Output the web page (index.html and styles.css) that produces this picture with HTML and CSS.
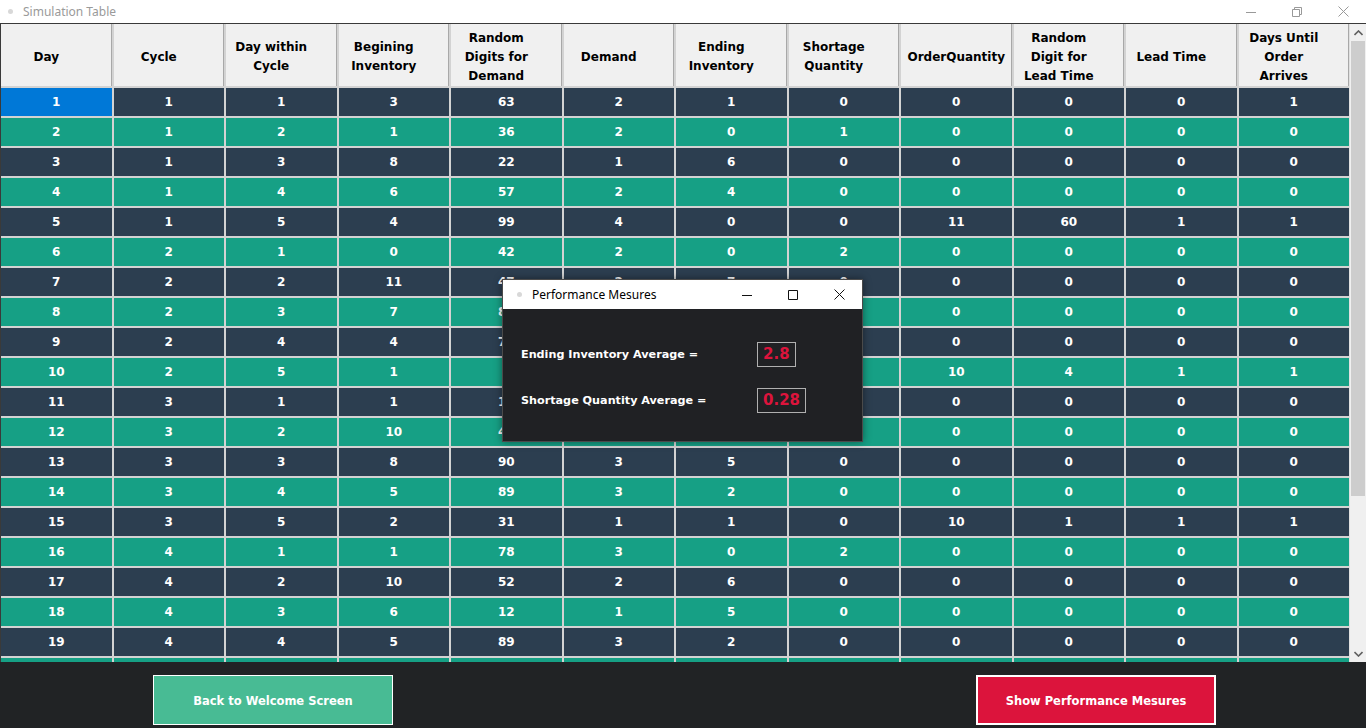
FILE: index.html
```html
<!DOCTYPE html>
<html>
<head>
<meta charset="utf-8">
<title>Simulation Table</title>
<link rel="stylesheet" href="styles.css">
</head>
<body>
<div class="app">
  <div class="titlebar">
    <div class="tb-left">
      <span class="app-icon"></span>
      <span class="tb-title">Simulation Table</span>
    </div>
    <div class="tb-controls">
      <span class="tb-btn"><svg width="10" height="10" viewBox="0 0 10 10"><path d="M0 5.5h10" stroke="#999" stroke-width="1"/></svg></span>
      <span class="tb-btn"><svg width="10" height="10" viewBox="0 0 10 10"><path d="M0.5 2.5h7v7h-7z M2.5 2.5v-2h7v7h-2" fill="none" stroke="#999" stroke-width="1"/></svg></span>
      <span class="tb-btn"><svg width="11" height="11" viewBox="0 0 11 11"><path d="M0.5 0.5l10 10M10.5 0.5l-10 10" stroke="#999" stroke-width="1"/></svg></span>
    </div>
  </div>

  <div class="table-wrap">
    <div class="grid" id="grid">
      <div class="th">Day</div>
      <div class="th">Cycle</div>
      <div class="th">Day within<br>Cycle</div>
      <div class="th">Begining<br>Inventory</div>
      <div class="th">Random<br>Digits for<br>Demand</div>
      <div class="th">Demand</div>
      <div class="th">Ending<br>Inventory</div>
      <div class="th">Shortage<br>Quantity</div>
      <div class="th wide">OrderQuantity</div>
      <div class="th">Random<br>Digit for<br>Lead Time</div>
      <div class="th">Lead Time</div>
      <div class="th">Days Until<br>Order<br>Arrives</div>

      <div class="td sel">1</div><div class="td d">1</div><div class="td d">1</div><div class="td d">3</div><div class="td d">63</div><div class="td d">2</div><div class="td d">1</div><div class="td d">0</div><div class="td d">0</div><div class="td d">0</div><div class="td d">0</div><div class="td d">1</div>
      <div class="td g">2</div><div class="td g">1</div><div class="td g">2</div><div class="td g">1</div><div class="td g">36</div><div class="td g">2</div><div class="td g">0</div><div class="td g">1</div><div class="td g">0</div><div class="td g">0</div><div class="td g">0</div><div class="td g">0</div>
      <div class="td d">3</div><div class="td d">1</div><div class="td d">3</div><div class="td d">8</div><div class="td d">22</div><div class="td d">1</div><div class="td d">6</div><div class="td d">0</div><div class="td d">0</div><div class="td d">0</div><div class="td d">0</div><div class="td d">0</div>
      <div class="td g">4</div><div class="td g">1</div><div class="td g">4</div><div class="td g">6</div><div class="td g">57</div><div class="td g">2</div><div class="td g">4</div><div class="td g">0</div><div class="td g">0</div><div class="td g">0</div><div class="td g">0</div><div class="td g">0</div>
      <div class="td d">5</div><div class="td d">1</div><div class="td d">5</div><div class="td d">4</div><div class="td d">99</div><div class="td d">4</div><div class="td d">0</div><div class="td d">0</div><div class="td d">11</div><div class="td d">60</div><div class="td d">1</div><div class="td d">1</div>
      <div class="td g">6</div><div class="td g">2</div><div class="td g">1</div><div class="td g">0</div><div class="td g">42</div><div class="td g">2</div><div class="td g">0</div><div class="td g">2</div><div class="td g">0</div><div class="td g">0</div><div class="td g">0</div><div class="td g">0</div>
      <div class="td d">7</div><div class="td d">2</div><div class="td d">2</div><div class="td d">11</div><div class="td d">47</div><div class="td d">2</div><div class="td d">7</div><div class="td d">0</div><div class="td d">0</div><div class="td d">0</div><div class="td d">0</div><div class="td d">0</div>
      <div class="td g">8</div><div class="td g">2</div><div class="td g">3</div><div class="td g">7</div><div class="td g">86</div><div class="td g">3</div><div class="td g">4</div><div class="td g">0</div><div class="td g">0</div><div class="td g">0</div><div class="td g">0</div><div class="td g">0</div>
      <div class="td d">9</div><div class="td d">2</div><div class="td d">4</div><div class="td d">4</div><div class="td d">74</div><div class="td d">3</div><div class="td d">1</div><div class="td d">0</div><div class="td d">0</div><div class="td d">0</div><div class="td d">0</div><div class="td d">0</div>
      <div class="td g">10</div><div class="td g">2</div><div class="td g">5</div><div class="td g">1</div><div class="td g">5</div><div class="td g">0</div><div class="td g">1</div><div class="td g">0</div><div class="td g">10</div><div class="td g">4</div><div class="td g">1</div><div class="td g">1</div>
      <div class="td d">11</div><div class="td d">3</div><div class="td d">1</div><div class="td d">1</div><div class="td d">18</div><div class="td d">1</div><div class="td d">0</div><div class="td d">0</div><div class="td d">0</div><div class="td d">0</div><div class="td d">0</div><div class="td d">0</div>
      <div class="td g">12</div><div class="td g">3</div><div class="td g">2</div><div class="td g">10</div><div class="td g">45</div><div class="td g">2</div><div class="td g">8</div><div class="td g">0</div><div class="td g">0</div><div class="td g">0</div><div class="td g">0</div><div class="td g">0</div>
      <div class="td d">13</div><div class="td d">3</div><div class="td d">3</div><div class="td d">8</div><div class="td d">90</div><div class="td d">3</div><div class="td d">5</div><div class="td d">0</div><div class="td d">0</div><div class="td d">0</div><div class="td d">0</div><div class="td d">0</div>
      <div class="td g">14</div><div class="td g">3</div><div class="td g">4</div><div class="td g">5</div><div class="td g">89</div><div class="td g">3</div><div class="td g">2</div><div class="td g">0</div><div class="td g">0</div><div class="td g">0</div><div class="td g">0</div><div class="td g">0</div>
      <div class="td d">15</div><div class="td d">3</div><div class="td d">5</div><div class="td d">2</div><div class="td d">31</div><div class="td d">1</div><div class="td d">1</div><div class="td d">0</div><div class="td d">10</div><div class="td d">1</div><div class="td d">1</div><div class="td d">1</div>
      <div class="td g">16</div><div class="td g">4</div><div class="td g">1</div><div class="td g">1</div><div class="td g">78</div><div class="td g">3</div><div class="td g">0</div><div class="td g">2</div><div class="td g">0</div><div class="td g">0</div><div class="td g">0</div><div class="td g">0</div>
      <div class="td d">17</div><div class="td d">4</div><div class="td d">2</div><div class="td d">10</div><div class="td d">52</div><div class="td d">2</div><div class="td d">6</div><div class="td d">0</div><div class="td d">0</div><div class="td d">0</div><div class="td d">0</div><div class="td d">0</div>
      <div class="td g">18</div><div class="td g">4</div><div class="td g">3</div><div class="td g">6</div><div class="td g">12</div><div class="td g">1</div><div class="td g">5</div><div class="td g">0</div><div class="td g">0</div><div class="td g">0</div><div class="td g">0</div><div class="td g">0</div>
      <div class="td d">19</div><div class="td d">4</div><div class="td d">4</div><div class="td d">5</div><div class="td d">89</div><div class="td d">3</div><div class="td d">2</div><div class="td d">0</div><div class="td d">0</div><div class="td d">0</div><div class="td d">0</div><div class="td d">0</div>
      <div class="td g"></div><div class="td g"></div><div class="td g"></div><div class="td g"></div><div class="td g"></div><div class="td g"></div><div class="td g"></div><div class="td g"></div><div class="td g"></div><div class="td g"></div><div class="td g"></div><div class="td g"></div>
    </div>
    <div class="scrollbar">
      <div class="sb-arrow"><svg width="9" height="6" viewBox="0 0 9 6"><path d="M0.5 5L4.5 1L8.5 5" fill="none" stroke="#606060" stroke-width="1.6"/></svg></div>
      <div class="sb-track"><div class="sb-thumb"></div></div>
      <div class="sb-arrow"><svg width="9" height="6" viewBox="0 0 9 6"><path d="M0.5 1L4.5 5L8.5 1" fill="none" stroke="#606060" stroke-width="1.6"/></svg></div>
    </div>
  </div>

  <div class="footer">
    <button class="btn btn-green">Back to Welcome Screen</button>
    <button class="btn btn-red">Show Performance Mesures</button>
  </div>

  <div class="dialog">
    <div class="dlg-title">
      <div class="tb-left">
        <span class="app-icon"></span>
        <span class="dlg-text">Performance Mesures</span>
      </div>
      <div class="dlg-controls">
        <span class="dlg-btn"><svg width="10" height="10" viewBox="0 0 10 10"><path d="M0 5.5h10" stroke="#111" stroke-width="1"/></svg></span>
        <span class="dlg-btn"><svg width="10" height="10" viewBox="0 0 10 10"><path d="M0.5 0.5h9v9h-9z" fill="none" stroke="#111" stroke-width="1"/></svg></span>
        <span class="dlg-btn"><svg width="11" height="11" viewBox="0 0 11 11"><path d="M0.5 0.5l10 10M10.5 0.5l-10 10" stroke="#111" stroke-width="1"/></svg></span>
      </div>
    </div>
    <div class="dlg-body">
      <div class="dlg-row">
        <span class="dlg-label">Ending Inventory Average =</span>
        <span class="dlg-value">2.8</span>
      </div>
      <div class="dlg-row">
        <span class="dlg-label">Shortage Quantity Average =</span>
        <span class="dlg-value">0.28</span>
      </div>
    </div>
  </div>
</div>
</body>
</html>
```

FILE: styles.css
```css
* { box-sizing: border-box; }
html, body { margin: 0; padding: 0; }
body {
  width: 1366px;
  height: 728px;
  overflow: hidden;
  background: #ffffff;
  font-family: "DejaVu Sans", "Liberation Sans", sans-serif;
}
.app {
  position: relative;
  width: 1366px;
  height: 728px;
  display: flex;
  flex-direction: column;
}
.titlebar {
  height: 23px;
  display: flex;
  justify-content: space-between;
  align-items: center;
  background: #ffffff;
}
.tb-left {
  display: flex;
  align-items: center;
}
.app-icon {
  width: 5px;
  height: 5px;
  border-radius: 50%;
  background: #d8d8d8;
  margin-left: 8px;
  margin-right: 10px;
}
.tb-title {
  font-family: "Noto Sans", "Open Sans", sans-serif;
  font-size: 12px;
  color: #9a9a9a;
}
.tb-controls {
  display: flex;
  height: 23px;
}
.tb-btn {
  width: 46px;
  height: 23px;
  display: flex;
  align-items: center;
  justify-content: center;
}
.table-wrap {
  height: 639px;
  display: flex;
  border-top: 1px solid #3a3a3a;
  border-left: 1px solid #3a3a3a;
  background: #f0f0f0;
}
.grid {
  flex: 1;
  height: 638px;
  overflow: hidden;
  display: grid;
  grid-template-columns: repeat(12, 1fr);
  grid-template-rows: 62px;
  grid-auto-rows: 28px;
  gap: 2px;
  background: #d3d3d3;
  align-content: start;
}
.th {
  background: #f0f0f0;
  color: #000;
  font-weight: bold;
  font-size: 12px;
  line-height: 19px;
  text-align: center;
  display: flex;
  align-items: center;
  justify-content: center;
  padding: 4px 20px 0 0;
  box-shadow: inset -1px 0 0 #a8a8a8;
}
.th.wide { padding-right: 0; }
.td {
  color: #ffffff;
  font-weight: bold;
  font-size: 12px;
  display: flex;
  align-items: center;
  justify-content: center;
}
.td.d { background: #2c3e50; }
.td.g { background: #16a085; }
.td.sel { background: #0078d7; }
.scrollbar {
  width: 17px;
  height: 638px;
  background: #f0f0f0;
  display: flex;
  flex-direction: column;
  border-left: 1px solid #e0e0e0;
}
.sb-arrow {
  height: 17px;
  display: flex;
  align-items: center;
  justify-content: center;
}
.sb-track {
  flex: 1;
  padding: 0 1px;
}
.sb-thumb {
  height: 455px;
  background: #cdcdcd;
}
.footer {
  flex: 1;
  background: #212325;
  display: flex;
  align-items: flex-start;
  padding-top: 13px;
}
.btn {
  width: 240px;
  height: 50px;
  font-family: "DejaVu Sans", sans-serif;
  font-weight: bold;
  font-size: 11.5px;
  color: #ffffff;
  cursor: pointer;
  padding-top: 2px;
}
.btn-green {
  margin-left: 153px;
  background: #48bb94;
  border: 1px solid #ffffff;
}
.btn-red {
  margin-left: 583px;
  background: #dc143c;
  border: 2px solid #ffffff;
}
.dialog {
  position: absolute;
  left: 502px;
  top: 279px;
  width: 361px;
  height: 163px;
  background: #202124;
  border: 1px solid #4a4a4a;
  box-shadow: 0 0 8px rgba(0,0,0,0.45);
  display: flex;
  flex-direction: column;
}
.dlg-title {
  height: 29px;
  background: #ffffff;
  display: flex;
  justify-content: space-between;
  align-items: center;
}
.dlg-title .app-icon { margin-left: 14px; margin-right: 10px; }
.dlg-text {
  font-family: "Noto Sans", "Open Sans", sans-serif;
  font-size: 12px;
  color: #000;
}
.dlg-controls {
  display: flex;
  height: 29px;
}
.dlg-btn {
  width: 46px;
  height: 29px;
  display: flex;
  align-items: center;
  justify-content: center;
}
.dlg-body {
  padding: 32px 0 0 18px;
  display: flex;
  flex-direction: column;
  gap: 20px;
}
.dlg-row {
  display: flex;
  align-items: center;
  height: 26px;
}
.dlg-label {
  width: 236px;
  color: #ffffff;
  font-weight: bold;
  font-size: 11.2px;
}
.dlg-value {
  border: 1px solid #b0b0b0;
  color: #dc143c;
  font-weight: bold;
  font-size: 15px;
  padding: 2px 5px;
  height: 25px;
  display: flex;
  align-items: center;
}
```
